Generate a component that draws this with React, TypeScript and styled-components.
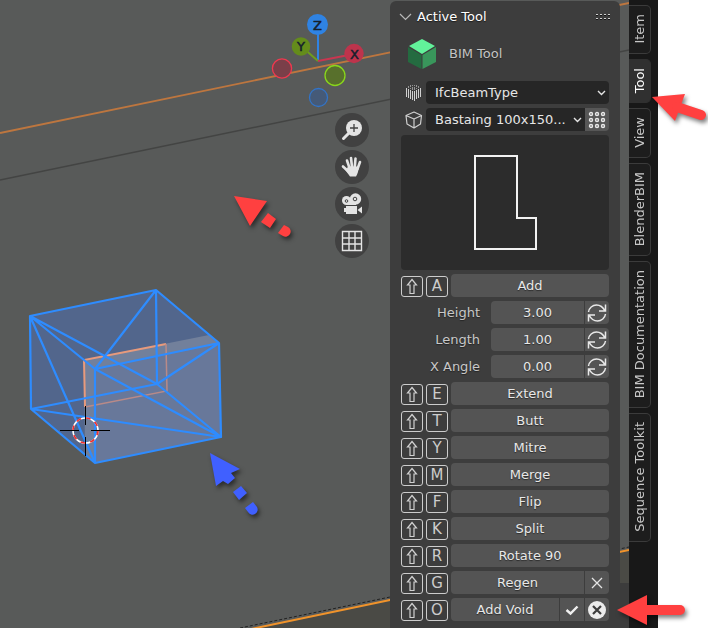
import React from "react";
import styled, { createGlobalStyle, css } from "styled-components";

const GlobalStyle = createGlobalStyle`
  * { box-sizing: border-box; }
  body {
    margin: 0;
    background: #ffffff;
    font-family: "DejaVu Sans", sans-serif;
    font-size: 13px;
    line-height: 20px;
  }
  button, input, select { font: inherit; color: inherit; margin: 0; }
`;

const Page = styled.main`
  display: flex;
  min-height: 100vh;
  color: #e2e2e2;
`;

const Editor = styled.div`
  position: relative;
  display: flex;
  flex: 1;
  min-width: 0;
  padding: 1px 9px 0 0;
  overflow: hidden;
  background: #585a59;
`;

const SceneDrawing = styled.svg`
  position: absolute;
  top: 0;
  left: 0;
`;

const Viewport = styled.section`
  position: relative;
  display: flex;
  flex: 1;
  flex-direction: column;
  align-items: flex-end;
  min-width: 0;
  padding: 7px 21px 0 0;
`;

const Gizmo = styled.svg`
  display: block;
  margin: 0 4px 4px 0;
`;

const NavButtons = styled.div`
  display: flex;
  flex-direction: column;
  gap: 3px;
`;

const NavButton = styled.button`
  display: grid;
  place-items: center;
  width: 34px;
  height: 34px;
  padding: 0;
  border: 0;
  border-radius: 50%;
  background: #414141;
`;

const Panel = styled.section`
  position: relative;
  flex: 0 0 230px;
  padding: 0 11px 7px;
  border-radius: 6px 6px 0 0;
  background: #3d3d3d;
`;

const PanelHeader = styled.header`
  display: flex;
  align-items: center;
  justify-content: space-between;
  height: 32px;
  margin: 0 -2px;
`;

const PanelToggle = styled.button`
  display: flex;
  align-items: center;
  gap: 5px;
  padding: 0;
  border: 0;
  background: none;
  color: #ffffff;
  text-shadow: 0 1px 1px #1c1c1c;
`;

const ToolTitle = styled.div`
  display: flex;
  align-items: center;
  gap: 13px;
  height: 42px;
  margin-bottom: 6px;
  padding-left: 7px;
  color: #c4c4c4;
  text-shadow: 0 1px 1px #242424;
`;

const Stack = styled.div`
  display: flex;
  flex-direction: column;
  gap: 4px;
`;

const SelectRow = styled.div`
  display: flex;
  align-items: center;
  height: 23px;
`;

const TypeIcon = styled.span`
  display: grid;
  flex: 0 0 25px;
  justify-content: center;
  align-items: center;
`;

const SelectBox = styled.label<{ $joined?: boolean }>`
  position: relative;
  flex: 1;
  min-width: 0;
  height: 23px;
  overflow: hidden;
  border-radius: ${(p) => (p.$joined ? "4px 0 0 4px" : "4px")};
  background: #262626;
`;

const Select = styled.select`
  width: 100%;
  height: 23px;
  padding: 0 0 0 9px;
  border: 0;
  appearance: none;
  background: transparent;
  color: #e6e6e6;
`;

const SelectArrow = styled.svg`
  position: absolute;
  top: 8px;
  right: 3px;
  pointer-events: none;
`;

const Preview = styled.div`
  display: grid;
  place-items: center;
  height: 135px;
  border-radius: 4px;
  background: #2c2c2c;
`;

const ActionRow = styled.div`
  display: flex;
  align-items: flex-end;
  gap: 3px;
  height: 23px;
`;

const Key = styled.kbd`
  display: grid;
  flex: 0 0 22px;
  place-items: center;
  height: 21px;
  border: 1px solid #cccccc;
  border-radius: 3px;
  color: #cccccc;
  font-family: "DejaVu Sans", sans-serif;
  font-size: 15px;
  line-height: 19px;
`;

const ButtonGroup = styled.div`
  display: flex;
  flex: 1;
  gap: 1px;
  min-width: 0;
  overflow: hidden;
  border-radius: 4px;
`;

const control = css`
  height: 23px;
  padding: 0;
  border: 0;
  border-radius: 0;
  background: #545454;
  color: #e8e8e8;
  text-align: center;
  text-shadow: 0 1px 1px #2b2b2b;
`;

const ActionButton = styled.button`
  ${control}
  flex: 1;
  min-width: 0;
`;

const IconButton = styled.button`
  ${control}
  display: grid;
  flex: 0 0 24px;
  place-items: center;
`;

const GridButton = styled(IconButton)`
  border-radius: 0 4px 4px 0;
  background: #575757;
`;

const PropertyRow = styled.div`
  display: grid;
  grid-template-columns: 1fr 118px;
  align-items: center;
  gap: 11px;
  height: 23px;
`;

const PropertyLabel = styled.label`
  color: #c8c8c8;
  text-align: right;
  text-shadow: 0 1px 1px #242424;
`;

const ValueInput = styled.input`
  ${control}
  flex: 1;
  min-width: 0;
`;

const SideBar = styled.aside`
  position: relative;
  flex: 0 0 29px;
  margin-right: 50px;
  padding-top: 5px;
  background: #181818;
`;

const TabList = styled.div`
  display: flex;
  flex-direction: column;
  gap: 5px;
  width: 22px;
`;

const Tab = styled.button<{ $active?: boolean }>`
  display: flex;
  justify-content: center;
  padding: 8px 0 9px;
  border: 1px solid ${(p) => (p.$active ? "#303030" : "#3b3b3b")};
  border-left: 0;
  border-radius: 0 5px 5px 0;
  background: ${(p) => (p.$active ? "#303030" : "#1d1d1d")};
  color: ${(p) => (p.$active ? "#ffffff" : "#c8c8c8")};
`;

const TabText = styled.span`
  writing-mode: vertical-rl;
  transform: rotate(180deg);
  line-height: 20px;
  white-space: nowrap;
`;

const Callouts = styled.svg`
  position: absolute;
  top: 0;
  left: -15px;
  overflow: visible;
  filter: drop-shadow(2px 3px 2px rgba(0, 0, 0, 0.5));
  pointer-events: none;
`;

const wire =
  "M30 316L156 290L219 343L95 369ZM31 409L157 384L221 437L95 463ZM30 316L31 409M156 290L157 384M219 343L221 437M95 369V463M156 290L95 369M30 316L157 384M30 316L95 463M95 369L221 437M219 343L157 384M31 409L221 437";

function Scene() {
  return (
    <SceneDrawing width="1600" height="1200" viewBox="0 0 1600 1200" aria-hidden="true">
      <path d="M256 628L390 600L629 550L1600 347V1200H0V681Z" fill="#4a4a45" />
      <path d="M390 583H1600V1200H390Z" fill="#3c3c3c" />
      <path d="M0 133L629 3" stroke="#bd763f" strokeWidth="1.8" />
      <path d="M0 180L629 50" stroke="#434443" strokeWidth="1.5" />
      <path d="M0 681L256 628L390 600L629 550" fill="none" stroke="#f0932b" strokeWidth="2" />
      <path d="M240 628L390 597L629 547" fill="none" stroke="#222" strokeDasharray="3 2" />
      <path d="M30 316L156 290L219 343L221 437L95 463L31 409Z" fill="#52668c" />
      <path d="M95 369L219 343L221 437L95 463Z" fill="#68789a" />
      <path d="M84 360L209 335L219 343L95 369V463L85 454Z" fill="#72809b" />
      <path d="M85 407L84 360L166 344" fill="none" stroke="#e89a7c" strokeWidth="2" />
      <path d="M166 344L167 391L85 407" fill="none" stroke="#b98a88" strokeWidth="1.5" />
      <path d={wire} fill="none" stroke="#2e8cff" strokeWidth="2.2" strokeLinejoin="round" />
      <circle cx="85.5" cy="430.5" r="12.5" fill="none" stroke="#ffffff" strokeWidth="1.6" />
      <circle cx="85.5" cy="430.5" r="12.5" fill="none" stroke="#f02f2f" strokeWidth="1.6" strokeDasharray="4.9 4.9" />
      <path d="M60 430.5H79M91 430.5H110M85.5 406V425M85.5 437V456" stroke="#000" />
      <g fill="#ff4040" filter="drop-shadow(2px 3px 2px rgba(0,0,0,.5))">
        <path d="M234 196L267 201L250 226ZM268 213L276 219L270 228L261 222Z" />
        <path d="M284 225L288 227A5 5 0 1 1 283 236L278 233Z" />
      </g>
      <g fill="#4060ff" filter="drop-shadow(2px 3px 2px rgba(0,0,0,.5))">
        <path d="M210 453L240 469L231 473L235 478L228 484L223 481L216 486ZM241 486L247 493L239 500L233 492Z" />
        <path d="M253 502L257 507A5 5 0 1 1 248 512L245 508Z" />
      </g>
    </SceneDrawing>
  );
}

function AxisGizmo() {
  return (
    <Gizmo width="100" height="101" viewBox="265 8 100 101" role="img" aria-label="View axes">
      <path d="M318 61V30" stroke="#2f83e3" strokeWidth="2" />
      <path d="M318 61L301 46" stroke="#6f9c1f" strokeWidth="2" />
      <path d="M318 61L354 54" stroke="#c93650" strokeWidth="2" />
      <circle cx="317.5" cy="24.5" r="10.5" fill="#2f83e3" />
      <circle cx="301" cy="46.5" r="9.3" fill="#648c1b" />
      <circle cx="354" cy="53.5" r="9.7" fill="#bd344c" />
      <circle cx="282" cy="68.5" r="9.6" fill="#7a3f49" stroke="#f0384f" strokeWidth="1.3" />
      <circle cx="335" cy="75.5" r="10" fill="#58702c" stroke="#89d61b" strokeWidth="1.3" />
      <circle cx="318.5" cy="97.5" r="9" fill="#455a78" stroke="#3274c8" strokeWidth="1.3" />
      <g fill="#16202c" stroke="#16202c" strokeWidth="0.5" fontSize="13" textAnchor="middle">
        <text x="317.5" y="29.5">Z</text>
        <text x="301" y="51">Y</text>
        <text x="354.5" y="58.5">X</text>
      </g>
    </Gizmo>
  );
}

const ZoomIcon = () => (
  <svg width="22" height="22" viewBox="0 0 22 22">
    <circle cx="13" cy="9" r="8" fill="#e4e4e4" />
    <path d="M8 14L2.5 19.5" stroke="#e4e4e4" strokeWidth="3" strokeLinecap="round" />
    <path d="M9 9H17M13 5V13" stroke="#414141" strokeWidth="1.3" />
  </svg>
);

const HandIcon = () => (
  <svg width="22" height="22" viewBox="0 0 22 22">
    <g stroke="#e4e4e4" strokeWidth="2.6" strokeLinecap="round">
      <path d="M6 4.5L8.5 12M10 2L11 11M14.5 2.5L13.8 11M19 6L16.5 13M2 10.500L8 16" />
    </g>
    <path d="M7 10.5H17.700C17.700 15 16.500 18 15 20.5H9C7.500 18.500 5.500 15.500 3.500 13L6 12.500Z" fill="#e4e4e4" />
  </svg>
);

const CameraIcon = () => (
  <svg width="22" height="22" viewBox="0 0 22 22">
    <path d="M6 7H15V12H6Z" fill="#e4e4e4" />
    <circle cx="5.5" cy="7.5" r="4.5" fill="#e4e4e4" />
    <circle cx="14.5" cy="6" r="5.7" fill="#e4e4e4" />
    <circle cx="5.5" cy="8" r="1.3" fill="none" stroke="#414141" />
    <circle cx="14" cy="6" r="1.8" fill="none" stroke="#414141" />
    <path d="M5 13H16V21H5V19H3V15H5ZM16.5 17L21 13.5V20.5Z" fill="#e4e4e4" />
  </svg>
);

const GridIcon = () => (
  <svg width="22" height="22" viewBox="0 0 22 22">
    <path d="M1.5 1.5H20.5V20.5H1.5ZM8 1.5V20.5M14 1.5V20.5M1.5 8H20.5M1.5 14H20.5" fill="none" stroke="#e4e4e4" strokeWidth="1.4" />
  </svg>
);

const BimIcon = () => (
  <svg width="28" height="32" viewBox="0 0 28 32">
    <path d="M14 1L27 8L14 16L1 8Z" fill="#62f29a" />
    <path d="M0 9L13.5 17V31L0 24Z" fill="#246b40" />
    <path d="M28 9L14.5 17V31L28 24Z" fill="#39965b" />
  </svg>
);

const BeamIcon = () => (
  <svg width="18" height="18" viewBox="0 0 18 18" stroke="#d0d0d0">
    <path d="M1.5 4V13M3.5 5V14M5.5 6V15M7.5 7V16M9.5 7V17M11.5 6V15M13.5 5V14M15.5 4V13" />
    <path d="M3.5 2V4M5.5 1V3M7.5 1V2M9.5 1V2M11.5 1V3M13.5 2V4M5.5 4V5M7.5 3V6M9.5 3V6M11.5 4V5" opacity=".6" />
  </svg>
);

const CubeIcon = () => (
  <svg width="18" height="18" viewBox="0 0 18 18" fill="none" stroke="#d0d0d0" strokeWidth="1.2" strokeLinejoin="round">
    <path d="M9 1L16.5 4.5L15.5 13L9 17L2 13L1 4.5ZM1 4.5L9 8L16.5 4.5M9 8V17" />
  </svg>
);

const ShiftIcon = () => (
  <svg width="12" height="17" viewBox="0 0 12 17" fill="none" stroke="#d0d0d0" strokeWidth="1.2">
    <path d="M6 1.500L10.500 7H8V15.500H4V7H1.500Z" />
  </svg>
);

const RefreshIcon = () => (
  <svg width="20" height="20" viewBox="0 0 20 20" fill="none" stroke="#e8e8e8" strokeWidth="1.5">
    <path d="M1.5 9C2 5 5.5 2 9.5 2C13 2 16 4 18 8M18.5 1.5V8H12" />
    <path d="M18.5 11C18 15 14.5 18 10.5 18C7 18 4 16 2 12M1.5 18.5V12H8" />
  </svg>
);

const Chevron = () => (
  <SelectArrow width="9" height="8" viewBox="0 0 9 8" fill="none" stroke="#e4e4e4" strokeWidth="1.4" aria-hidden="true">
    <path d="M1 2L4.5 5.5L8 2" />
  </SelectArrow>
);

const DotsIcon = () => (
  <svg width="18" height="18" viewBox="0 0 18 18" fill="none" stroke="#e8e8e8" strokeWidth="1.4">
    {[3, 9, 15].map((y) => [3, 9, 15].map((x) => <circle key={`${x}-${y}`} cx={x} cy={y} r="1.5" />))}
  </svg>
);

const CrossIcon = () => (
  <svg width="12" height="12" viewBox="0 0 12 12" stroke="#e4e4e4" strokeWidth="1.3">
    <path d="M1 1L11 11M11 1L1 11" />
  </svg>
);

const CheckIcon = () => (
  <svg width="14" height="12" viewBox="0 0 14 12" fill="none" stroke="#f0f0f0" strokeWidth="2.4">
    <path d="M1.5 6L5.5 9.5L12.5 2.5" />
  </svg>
);

const CancelIcon = () => (
  <svg width="20" height="20" viewBox="0 0 20 20">
    <circle cx="10" cy="10" r="9" fill="#ececec" />
    <path d="M6 6L14 14M14 6L6 14" stroke="#3c3c3c" strokeWidth="2.2" />
  </svg>
);

const GripIcon = () => (
  <svg width="15" height="8" viewBox="0 0 15 8" aria-hidden="true">
    {[0, 4, 8, 12].map((x) => (
      <React.Fragment key={x}>
        <path d={`M${x} 1.500H${x + 2}M${x} 5.500H${x + 2}`} stroke="#d0d0d0" />
        <path d={`M${x} 2.500H${x + 2}M${x} 6.500H${x + 2}`} stroke="#151515" />
      </React.Fragment>
    ))}
  </svg>
);

const navItems = [
  { label: "Zoom", Icon: ZoomIcon },
  { label: "Move view", Icon: HandIcon },
  { label: "Camera view", Icon: CameraIcon },
  { label: "Toggle projection", Icon: GridIcon },
];

const properties = [
  { id: "height", label: "Height", value: "3.00" },
  { id: "length", label: "Length", value: "1.00" },
  { id: "x-angle", label: "X Angle", value: "0.00" },
];

const operations = [
  ["E", "Extend"],
  ["T", "Butt"],
  ["Y", "Mitre"],
  ["M", "Merge"],
  ["F", "Flip"],
  ["K", "Split"],
  ["R", "Rotate 90"],
];

const tabs = ["Item", "Tool", "View", "BlenderBIM", "BIM Documentation", "Sequence Toolkit"];

function Action({ hotkey, label, children }: { hotkey: string; label: string; children?: React.ReactNode }) {
  return (
    <ActionRow>
      <Key aria-label="Shift"><ShiftIcon /></Key>
      <Key>{hotkey}</Key>
      <ButtonGroup>
        <ActionButton type="button">{label}</ActionButton>
        {children}
      </ButtonGroup>
    </ActionRow>
  );
}

export default function App() {
  return (
    <Page>
      <GlobalStyle />
      <Editor>
        <Scene />
        <Viewport aria-label="3D viewport">
          <AxisGizmo />
          <NavButtons>
            {navItems.map(({ label, Icon }) => (
              <NavButton key={label} type="button" aria-label={label}><Icon /></NavButton>
            ))}
          </NavButtons>
        </Viewport>
        <Panel>
          <PanelHeader>
            <PanelToggle type="button" aria-expanded="true">
              <svg width="13" height="8" viewBox="0 0 13 8" fill="none" stroke="#b8b8b8" strokeWidth="1.2">
                <path d="M1 1L6.5 6.5L12 1" />
              </svg>
              Active Tool
            </PanelToggle>
            <GripIcon />
          </PanelHeader>
          <ToolTitle><BimIcon />BIM Tool</ToolTitle>
          <Stack>
            <SelectRow>
              <TypeIcon><BeamIcon /></TypeIcon>
              <SelectBox>
                <Select aria-label="Element class"><option>IfcBeamType</option></Select>
                <Chevron />
              </SelectBox>
            </SelectRow>
            <SelectRow>
              <TypeIcon><CubeIcon /></TypeIcon>
              <SelectBox $joined>
                <Select aria-label="Element type"><option>Bastaing 100x150...</option></Select>
                <Chevron />
              </SelectBox>
              <GridButton type="button" aria-label="Browse types"><DotsIcon /></GridButton>
            </SelectRow>
            <Preview>
              <svg width="64" height="96" viewBox="0 0 64 96" fill="none" stroke="#f2f2f2" strokeWidth="2" role="img" aria-label="Profile">
                <path d="M2 1H44V63H63V94H2Z" />
              </svg>
            </Preview>
            <Action hotkey="A" label="Add" />
            {properties.map((p) => (
              <PropertyRow key={p.id}>
                <PropertyLabel htmlFor={p.id}>{p.label}</PropertyLabel>
                <ButtonGroup>
                  <ValueInput id={p.id} defaultValue={p.value} />
                  <IconButton type="button" aria-label={`Update ${p.label}`}><RefreshIcon /></IconButton>
                </ButtonGroup>
              </PropertyRow>
            ))}
            {operations.map(([key, label]) => <Action key={key} hotkey={key} label={label} />)}
            <Action hotkey="G" label="Regen">
              <IconButton type="button" aria-label="Clear"><CrossIcon /></IconButton>
            </Action>
            <Action hotkey="O" label="Add Void">
              <IconButton type="button" aria-label="Apply"><CheckIcon /></IconButton>
              <IconButton type="button" aria-label="Cancel"><CancelIcon /></IconButton>
            </Action>
          </Stack>
        </Panel>
      </Editor>
      <SideBar>
        <TabList role="tablist" aria-orientation="vertical">
          {tabs.map((name) => (
            <Tab key={name} type="button" role="tab" aria-selected={name === "Tool"} $active={name === "Tool"}>
              <TabText>{name}</TabText>
            </Tab>
          ))}
        </TabList>
        <Callouts width="90" height="628" viewBox="614 0 90 628" aria-hidden="true">
          <g fill="#ff4040" stroke="#ff4040" strokeLinecap="round">
            <path d="M652 97L685 94L675 121Z" stroke="none" />
            <path d="M677 107L701 115" strokeWidth="10" />
            <path d="M617 610L647 595V625Z" stroke="none" />
            <path d="M643 610H680" strokeWidth="10" />
          </g>
        </Callouts>
      </SideBar>
    </Page>
  );
}
